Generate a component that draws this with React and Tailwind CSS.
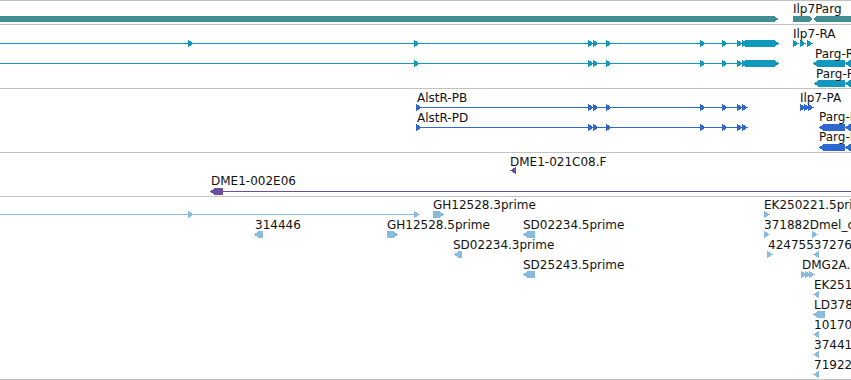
const TEAL = '#428e93';
const CYAN = '#1199bd';
const BLUE = '#2f68cf';
const PURPLE = '#6a4fa3';
const SKY = '#88bbde';

// glyph helpers, coordinates are page pixels (svg viewBox is offset per track)
const Glyph = ({ g, color }) => {
  const { t, x, y } = g;
  if (t === 'line') return <rect x={g.x1} y={y} width={g.x2 - g.x1} height={1} fill={color} />;
  if (t === 'r') return <polygon points={`${x},${y - 3} ${x + 6},${y + 0.5} ${x},${y + 4}`} fill={color} />;
  if (t === 'l') return <polygon points={`${x + 6},${y - 3} ${x},${y + 0.5} ${x + 6},${y + 4}`} fill={color} />;
  if (t === 'rb')
    return <polygon points={`${g.x1},${y - 3} ${g.x2 - 5},${y - 3} ${g.x2},${y + 0.5} ${g.x2 - 5},${y + 4} ${g.x1},${y + 4}`} fill={color} />;
  if (t === 'lb')
    return <polygon points={`${g.x1 + 5},${y - 3} ${g.x2},${y - 3} ${g.x2},${y + 4} ${g.x1 + 5},${y + 4} ${g.x1},${y + 0.5}`} fill={color} />;
  if (t === 'poly') return <polygon points={g.points} fill={color} />;
  return null;
};

const Label = ({ x, cap, top, children }) => (
  <span
    className="absolute whitespace-nowrap text-[12px] leading-[12px] text-[#111]"
    style={{ left: x, top: cap - top - 1 }}
  >
    {children}
  </span>
);

const Track = ({ top, height, className, color, glyphs, labels }) => (
  <div className={`relative overflow-hidden border-b border-[#c2c2c2] ${className}`}>
    <svg
      className="absolute inset-0"
      width={851}
      height={height}
      viewBox={`0 ${top} 851 ${height}`}
      shapeRendering="crispEdges"
    >
      {glyphs.map((g, i) => (
        <Glyph key={i} g={g} color={color} />
      ))}
    </svg>
    {labels.map(([x, cap, text]) => (
      <Label key={text + x} x={x} cap={cap} top={top}>
        {text}
      </Label>
    ))}
  </div>
);

const exonArrows = (y, first) => [
  { t: 'line', x1: 0, x2: 746, y },
  ...(first ? [{ t: 'r', x: 188, y }] : []),
  { t: 'r', x: 414, y },
  { t: 'r', x: 588, y },
  { t: 'r', x: 593, y },
  { t: 'r', x: 606, y },
  { t: 'r', x: 700, y },
  { t: 'r', x: 722, y },
  { t: 'r', x: 737, y },
  { t: 'r', x: 742, y },
  { t: 'rb', x1: 745, x2: 779, y },
];

const proteinRow = (y) => [
  { t: 'line', x1: 417, x2: 744, y },
  { t: 'r', x: 416, y },
  { t: 'r', x: 588, y },
  { t: 'r', x: 593, y },
  { t: 'r', x: 606, y },
  { t: 'r', x: 700, y },
  { t: 'r', x: 722, y },
  { t: 'r', x: 737, y },
  { t: 'r', x: 742, y },
];

const App = () => (
  <div className="w-[851px] h-[380px] overflow-hidden bg-white border-t border-[#c2c2c2] font-['DejaVu_Sans',sans-serif]">
    <Track
      top={1}
      height={23}
      className="h-[24px]"
      color={TEAL}
      glyphs={[
        { t: 'poly', points: '0,16 774,16 779,19 774,22 0,22' },
        { t: 'poly', points: '793,16 809,16 813,19 817,16 851,16 851,22 817,22 813,19 809,22 793,22' },
      ]}
      labels={[[793, 4, 'Ilp7Parg']]}
    />
    <Track
      top={25}
      height={63}
      className="h-[64px]"
      color={CYAN}
      glyphs={[
        ...exonArrows(43, true),
        ...exonArrows(63, false),
        { t: 'r', x: 793, y: 43 },
        { t: 'r', x: 800, y: 43 },
        { t: 'r', x: 807, y: 43 },
        { t: 'lb', x1: 813, x2: 845, y: 63 },
        { t: 'lb', x1: 845, x2: 870, y: 63 },
        { t: 'lb', x1: 814, x2: 845, y: 83 },
        { t: 'lb', x1: 845, x2: 870, y: 83 },
      ]}
      labels={[
        [793, 29, 'Ilp7-RA'],
        [815, 49, 'Parg-RA'],
        [816, 69, 'Parg-RB'],
      ]}
    />
    <Track
      top={89}
      height={63}
      className="h-[64px]"
      color={BLUE}
      glyphs={[
        ...proteinRow(107),
        ...proteinRow(127),
        { t: 'r', x: 800, y: 107 },
        { t: 'r', x: 804, y: 107 },
        { t: 'r', x: 808, y: 107 },
        { t: 'lb', x1: 819, x2: 845, y: 127 },
        { t: 'lb', x1: 845, x2: 870, y: 127 },
        { t: 'lb', x1: 819, x2: 845, y: 147 },
        { t: 'lb', x1: 845, x2: 870, y: 147 },
      ]}
      labels={[
        [417, 93, 'AlstR-PB'],
        [417, 113, 'AlstR-PD'],
        [800, 93, 'Ilp7-PA'],
        [819, 112, 'Parg-PA'],
        [819, 132, 'Parg-PB'],
      ]}
    />
    <Track
      top={153}
      height={43}
      className="h-[44px]"
      color={PURPLE}
      glyphs={[
        { t: 'l', x: 510, y: 170 },
        { t: 'lb', x1: 210, x2: 223, y: 191 },
        { t: 'line', x1: 222, x2: 851, y: 191 },
      ]}
      labels={[
        [510, 157, 'DME1-021C08.F'],
        [211, 176, 'DME1-002E06'],
      ]}
    />
    <Track
      top={197}
      height={182}
      className="h-[183px]"
      color={SKY}
      glyphs={[
        { t: 'line', x1: 0, x2: 418, y: 214 },
        { t: 'r', x: 188, y: 214 },
        { t: 'r', x: 414, y: 214 },
        { t: 'rb', x1: 433, x2: 444, y: 214 },
        { t: 'r', x: 764, y: 214 },
        { t: 'lb', x1: 254, x2: 263, y: 234 },
        { t: 'rb', x1: 387, x2: 398, y: 234 },
        { t: 'lb', x1: 523, x2: 535, y: 234 },
        { t: 'r', x: 764, y: 234 },
        { t: 'r', x: 812, y: 234 },
        { t: 'lb', x1: 454, x2: 462, y: 254 },
        { t: 'r', x: 767, y: 254 },
        { t: 'l', x: 813, y: 254 },
        { t: 'lb', x1: 523, x2: 535, y: 274 },
        { t: 'r', x: 801, y: 274 },
        { t: 'r', x: 805, y: 274 },
        { t: 'r', x: 809, y: 274 },
        { t: 'l', x: 813, y: 294 },
        { t: 'lb', x1: 813, x2: 825, y: 314 },
        { t: 'l', x: 813, y: 334 },
        { t: 'l', x: 813, y: 354 },
        { t: 'l', x: 813, y: 374 },
      ]}
      labels={[
        [433, 200, 'GH12528.3prime'],
        [764, 200, 'EK250221.5prime'],
        [255, 220, '314446'],
        [387, 220, 'GH12528.5prime'],
        [523, 220, 'SD02234.5prime'],
        [764, 220, '371882Dmel_cDNA'],
        [453, 240, 'SD02234.3prime'],
        [768, 240, '4247553727600'],
        [523, 260, 'SD25243.5prime'],
        [802, 260, 'DMG2A.3prime'],
        [814, 280, 'EK251040'],
        [814, 300, 'LD37861'],
        [814, 320, '1017043'],
        [814, 340, '3744102'],
        [814, 360, '7192236'],
      ]}
    />
  </div>
);

export default App;
